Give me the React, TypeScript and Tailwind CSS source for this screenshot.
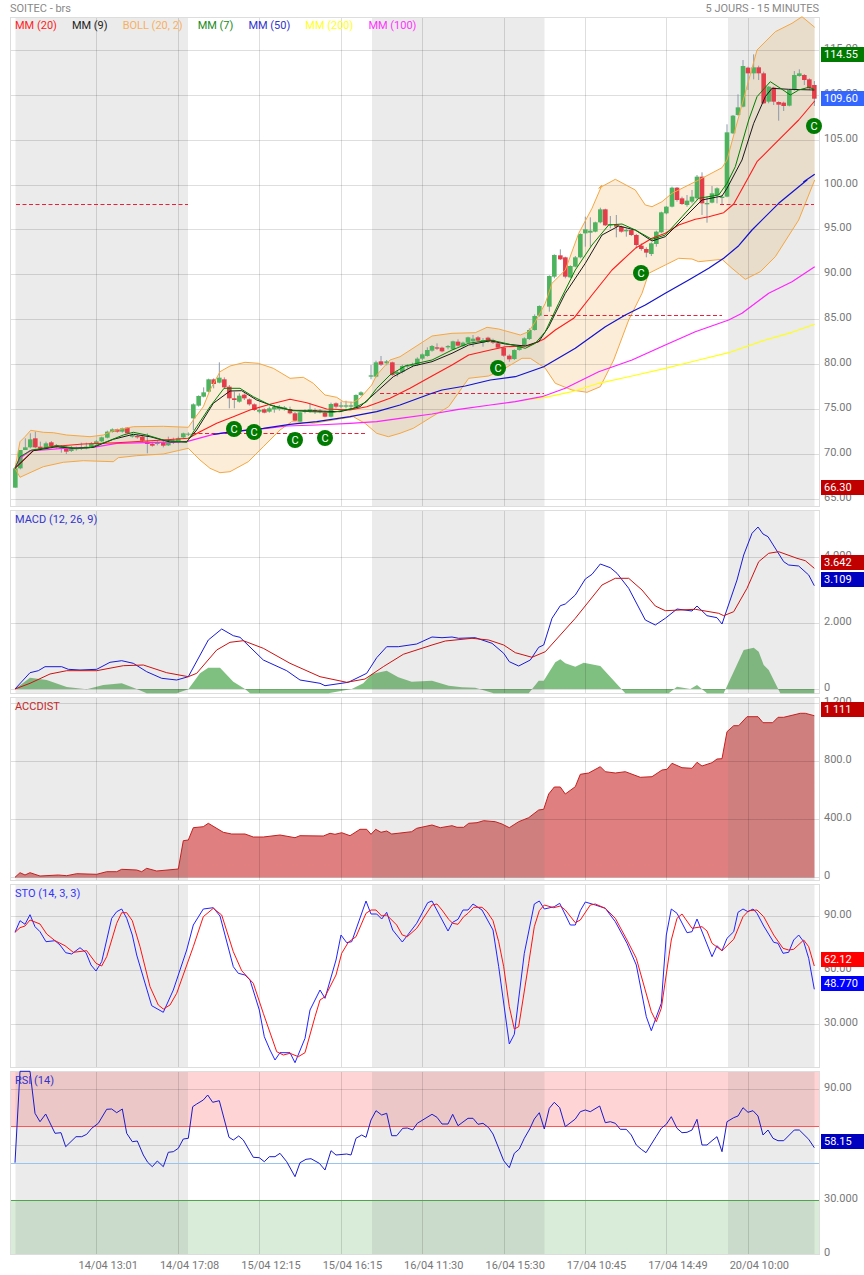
import type { ReactNode } from 'react';

type Pt = number[];

// points are traced off 3x crops, so each run carries the crop origin
const seg = (ox: number, oy: number, s: string): Pt[] =>
  s.trim().split(/\s+/).map((p) => {
    const [x, y] = p.split(',').map(Number);
    return [ox + x / 3, oy + y / 3];
  });
const pts = (a: Pt[]) => a.map((p) => `${p[0].toFixed(1)},${p[1].toFixed(1)}`).join(' ');

const VGRID = [96.5, 178.5, 259.5, 341.5, 422.5, 504.5, 585.5, 666.5, 748.5];
const BANDS = [[15.5, 188], [372, 544.5], [728, 814.5]];
const DATES = ['14/04 13:01', '14/04 17:08', '15/04 12:15', '15/04 16:15', '16/04 11:30', '16/04 15:30', '17/04 10:45', '17/04 14:49', '20/04 10:00'];

const bollUp = [
  ...seg(0, 260, '45,625 60,545 75,530 92,511 130,517 160,518 200,525 270,530 310,525 340,512 400,500 490,499 565,502 580,480 610,440 630,390 660,335 690,318 735,307 775,310 820,325 870,355 910,352 940,370 975,405 1010,412 1030,425 1060,427 1080,415 1115,375 1130,345 1170,300 1200,290 1296,228'),
  ...seg(432, 180, '60,460 130,458 165,442 200,447 265,465 290,455 310,425 340,370 360,310 400,270 440,160 480,85 510,15'),
  ...seg(432, 0, '500,565 550,538 610,570 640,615 660,620 690,605 720,580 800,540 870,503 885,480 920,350 975,150 1030,95 1080,70 1110,50 1148,82'),
];
const bollDown = [
  ...seg(0, 260, '45,625 60,652 90,638 130,620 190,607 250,602 340,605 355,593 410,587 490,582 565,565 600,600 630,625 660,638 690,635 745,605 790,560 840,510 875,485 900,487 940,490 1000,480 1060,470 1095,490 1130,520 1165,530 1200,520 1240,505 1296,470'),
  ...seg(432, 180, '50,680 110,595 170,588 210,570 270,535 295,535 340,565 370,610 420,630 465,637 505,620 545,540 590,420 630,340 650,280 700,255 740,235 780,237 800,245 870,238 900,265 940,298 985,275 1030,230 1100,120 1148,0'),
];
const mm20 = [
  ...seg(0, 260, '45,625 100,572 150,560 250,552 350,548 490,540 565,535 600,515 650,490 700,470 750,450 810,433 870,418 920,428 980,447 1050,450 1100,440 1170,415 1230,385 1296,348'),
  ...seg(432, 180, '60,555 110,525 175,510 220,500 290,497 335,478 370,450 425,415 480,345 540,270 610,205 660,175 700,160 740,135 790,118 830,110 875,98 905,72 945,0'),
  ...seg(432, 0, '975,485 1020,440 1060,400 1100,360 1148,303'),
];
const mm50 = [
  ...seg(0, 260, '640,523 700,515 790,505 870,493 950,485 1050,470 1130,455 1200,435 1296,400'),
  ...seg(432, 180, '30,630 100,618 175,600 250,590 335,560 430,505 520,440 580,405 640,375 700,340 770,300 830,265 875,235 920,197 960,150 1040,70 1125,0'),
  ...seg(432, 0, '1115,545 1148,523'),
];
const mm100 = [
  ...seg(0, 260, '45,625 60,595 90,572 130,570 190,565 280,562 350,550 440,548 560,545 640,523 700,515 800,505 860,498 950,495 1050,490 1130,485 1200,475 1296,462'),
  ...seg(432, 180, '80,688 175,675 250,665 330,650 400,625 500,575 600,540 700,495 790,455 890,420 930,400 1010,340 1080,305 1148,260'),
];
const mm200 = seg(432, 180, '280,660 340,652 420,635 500,610 600,588 700,565 800,540 890,518 1000,480 1080,457 1148,433');
const mm7 = [
  ...seg(0, 260, '45,625 60,590 95,570 150,562 170,557 230,565 270,563 320,545 370,525 400,517 440,525 490,540 560,547 590,500 630,440 672,385 720,385 760,410 810,435 870,450 930,455 1000,457 1060,445 1100,425 1130,385 1170,345 1215,318 1296,300'),
  ...seg(432, 180, '60,510 110,490 175,480 220,490 280,505 310,490 340,455 380,370 430,270 480,195 530,135 570,132 610,150 660,178 700,165 750,110 800,55 860,45 885,10'),
  ...seg(432, 0, '910,500 950,360 975,290 1015,245 1050,268 1075,285 1100,270 1130,262 1147,268'),
];
const mm9 = [
  ...seg(0, 260, '45,625 100,572 170,560 220,565 280,562 340,538 400,523 450,530 510,546 560,545 590,510 640,430 690,393 725,392 770,420 820,438 880,452 950,453 1020,455 1080,440 1130,395 1180,350 1240,318 1296,305'),
  ...seg(432, 180, '60,520 110,495 175,482 220,492 280,498 320,485 350,440 400,340 460,250 510,165 560,138 610,150 660,183 700,170 760,110 810,60 870,48 885,25'),
  ...seg(432, 0, '930,480 965,370 1000,290 1020,265 1070,268 1147,270'),
];

type Candle = [number, number, number, number, number, 'g' | 'r'];
const mapCandles = (ox: number, oy: number, rows: Candle[]) =>
  rows.map(([x, t, b, wt, wb, c]) => ({ x: ox + x / 3, t: oy + t / 3, b: oy + b / 3, wt: oy + wt / 3, wb: oy + wb / 3, c }));

const candles = [
  ...mapCandles(0, 260, [
    [46, 625, 683, 625, 683, 'g'], [61, 570, 625, 570, 628, 'g'], [76, 562, 570, 535, 570, 'g'], [91, 538, 562, 520, 565, 'g'],
    [106, 535, 562, 515, 565, 'r'], [121, 560, 566, 545, 572, 'r'], [138, 550, 568, 545, 570, 'g'], [154, 547, 558, 543, 565, 'r'],
    [169, 556, 562, 552, 566, 'r'], [184, 562, 566, 555, 578, 'g'], [199, 567, 575, 560, 582, 'r'], [214, 565, 573, 558, 576, 'g'],
    [229, 564, 568, 560, 572, 'g'], [244, 562, 566, 548, 570, 'g'], [259, 560, 565, 548, 568, 'g'], [274, 550, 562, 546, 564, 'g'],
    [289, 544, 552, 540, 556, 'g'], [305, 532, 544, 530, 546, 'g'], [322, 515, 533, 512, 535, 'g'], [337, 508, 516, 505, 518, 'g'],
    [352, 508, 515, 506, 518, 'r'], [367, 505, 515, 503, 518, 'g'], [382, 503, 520, 501, 522, 'r'], [397, 525, 530, 520, 533, 'g'],
    [412, 528, 532, 524, 536, 'r'], [427, 530, 542, 526, 546, 'r'], [442, 545, 552, 520, 580, 'r'], [457, 551, 557, 545, 560, 'r'],
    [472, 546, 552, 540, 556, 'g'], [490, 547, 557, 540, 562, 'r'], [505, 548, 556, 530, 558, 'g'], [520, 542, 548, 533, 552, 'g'],
    [535, 535, 547, 530, 550, 'g'], [550, 520, 532, 518, 534, 'g'], [565, 521, 524, 517, 528, 'g'], [580, 433, 475, 430, 510, 'g'],
    [596, 408, 437, 406, 440, 'g'], [611, 397, 410, 382, 412, 'g'], [626, 358, 395, 356, 397, 'g'], [641, 358, 372, 355, 385, 'r'],
    [658, 353, 368, 307, 370, 'g'], [673, 358, 382, 352, 385, 'r'], [688, 380, 415, 375, 445, 'r'], [703, 415, 420, 395, 445, 'r'],
    [718, 407, 425, 400, 428, 'g'], [733, 404, 415, 400, 420, 'r'], [748, 418, 433, 415, 437, 'r'], [763, 433, 450, 430, 453, 'r'],
    [778, 450, 455, 445, 460, 'g'], [793, 448, 458, 445, 460, 'r'], [808, 445, 455, 440, 458, 'g'], [823, 441, 448, 435, 458, 'g'],
    [838, 440, 447, 435, 452, 'g'], [853, 442, 448, 438, 452, 'g'], [870, 447, 460, 440, 463, 'r'], [885, 460, 482, 456, 484, 'r'],
    [900, 457, 485, 455, 487, 'g'], [915, 452, 456, 448, 460, 'g'], [930, 448, 454, 430, 458, 'g'], [945, 450, 454, 445, 462, 'r'],
    [960, 452, 456, 447, 460, 'r'], [975, 458, 470, 452, 472, 'r'], [993, 432, 470, 428, 472, 'g'], [1008, 430, 440, 427, 445, 'r'],
    [1023, 436, 440, 425, 445, 'g'], [1038, 436, 440, 422, 445, 'g'], [1053, 436, 440, 425, 445, 'g'], [1068, 405, 440, 403, 442, 'g'],
    [1083, 397, 405, 394, 408, 'g'], [1113, 346, 350, 315, 358, 'g'], [1128, 307, 350, 302, 352, 'g'], [1143, 304, 314, 288, 318, 'r'],
    [1160, 304, 310, 300, 316, 'g'], [1177, 307, 345, 305, 348, 'r'], [1192, 336, 342, 330, 350, 'g'], [1207, 318, 336, 314, 340, 'g'],
    [1222, 316, 320, 312, 325, 'g'], [1237, 314, 318, 308, 322, 'g'], [1252, 296, 314, 292, 318, 'g'], [1267, 283, 296, 280, 300, 'g'],
    [1282, 270, 288, 262, 290, 'g'],
  ]),
  ...mapCandles(432, 180, [
    [0, 498, 512, 495, 515, 'g'], [15, 502, 506, 490, 510, 'r'], [30, 503, 514, 500, 517, 'r'], [48, 498, 502, 495, 508, 'g'],
    [63, 484, 508, 482, 510, 'g'], [78, 485, 497, 478, 500, 'r'], [93, 488, 498, 485, 502, 'g'], [108, 472, 488, 470, 490, 'g'],
    [123, 476, 484, 465, 500, 'g'], [138, 472, 482, 468, 486, 'r'], [153, 480, 488, 474, 500, 'g'], [168, 473, 485, 470, 488, 'r'],
    [183, 480, 488, 476, 492, 'r'], [198, 490, 503, 486, 506, 'r'], [215, 503, 527, 500, 530, 'r'], [232, 527, 538, 523, 545, 'r'],
    [247, 510, 537, 508, 540, 'g'], [262, 497, 510, 495, 512, 'g'], [277, 475, 495, 472, 497, 'g'], [292, 450, 477, 445, 480, 'g'],
    [308, 408, 450, 403, 452, 'g'], [322, 378, 407, 376, 410, 'g'], [352, 288, 380, 286, 395, 'g'], [367, 225, 290, 223, 295, 'g'],
    [385, 226, 238, 208, 240, 'r'], [400, 232, 290, 230, 295, 'r'], [415, 258, 292, 256, 294, 'g'], [430, 232, 260, 228, 262, 'g'],
    [445, 162, 232, 160, 235, 'g'], [460, 148, 160, 110, 200, 'g'], [475, 152, 158, 112, 200, 'g'], [490, 127, 155, 125, 157, 'g'],
    [505, 88, 127, 83, 130, 'g'], [520, 88, 136, 86, 138, 'r'], [535, 132, 136, 108, 145, 'g'], [553, 132, 140, 105, 172, 'r'],
    [568, 140, 155, 137, 158, 'r'], [583, 150, 154, 145, 170, 'g'], [598, 150, 165, 147, 168, 'r'], [613, 165, 195, 162, 205, 'r'],
    [628, 197, 207, 190, 212, 'r'], [643, 207, 218, 202, 232, 'r'], [658, 190, 222, 187, 228, 'g'], [673, 155, 192, 152, 200, 'g'],
    [688, 97, 157, 95, 160, 'g'], [703, 80, 100, 78, 103, 'g'],
  ]),
  ...mapCandles(432, 0, [
    [720, 563, 620, 560, 622, 'g'], [735, 563, 600, 561, 605, 'r'], [750, 595, 612, 590, 615, 'r'], [765, 602, 615, 585, 620, 'g'],
    [780, 590, 605, 570, 610, 'g'], [795, 530, 595, 525, 600, 'g'], [810, 530, 610, 517, 645, 'r'], [825, 609, 613, 590, 668, 'g'],
    [840, 580, 608, 558, 610, 'g'], [855, 565, 585, 562, 610, 'g'], [870, 590, 594, 585, 612, 'g'], [885, 397, 590, 373, 592, 'g'],
    [903, 347, 400, 345, 402, 'g'], [918, 322, 345, 283, 347, 'g'], [933, 198, 320, 180, 322, 'g'], [948, 203, 220, 200, 270, 'r'],
    [965, 202, 220, 163, 238, 'g'], [980, 202, 220, 197, 240, 'r'], [995, 220, 310, 215, 312, 'r'], [1010, 260, 305, 258, 310, 'g'],
    [1025, 263, 305, 260, 315, 'r'], [1040, 306, 314, 304, 362, 'r'], [1055, 308, 318, 305, 333, 'r'], [1072, 270, 317, 268, 319, 'g'],
    [1087, 225, 270, 213, 272, 'g'], [1102, 220, 228, 208, 230, 'g'], [1117, 225, 240, 222, 255, 'r'], [1132, 238, 265, 235, 270, 'r'],
    [1147, 255, 296, 243, 318, 'r'],
  ]),
];

const MARKERS = [[234, 429], [254, 432], [295, 440], [325, 438], [498, 368], [641, 273], [814, 126]];
const DASHES = [[16, 188, 204.5], [720, 814, 204.5], [192, 367, 433.5], [380, 544, 393.5], [544, 722, 315.5]];

const macd = [
  ...seg(0, 505, '45,552 90,503 115,497 135,485 185,485 205,493 240,495 290,493 330,472 365,467 400,475 440,500 485,520 530,525 565,515 625,405 665,372 700,392 720,397 790,465 860,497 900,525 960,535 975,542 1045,532 1100,505 1130,458 1160,425 1195,425 1250,417 1296,396'),
  ...seg(432, 505, '30,398 60,396 80,400 130,398 180,415 215,445 232,470 260,483 295,465 320,427 335,420 360,340 385,302 400,297 430,270 460,222 480,208 505,177 535,188 555,205 590,250 640,345 670,360 700,340 735,312 780,318 795,303 825,332 855,338 870,357 915,225 935,150 960,85 978,66 993,87 1008,95 1055,170 1070,180 1100,183 1130,210 1147,242'),
];
const macdSig = [
  ...seg(0, 505, '45,552 90,535 150,507 200,497 290,497 370,482 430,480 500,503 565,515 590,505 650,435 690,412 730,407 790,430 870,475 960,515 1040,532 1095,522 1150,485 1210,448 1296,420'),
  ...seg(432, 505, '40,408 120,400 170,405 215,420 250,443 300,457 340,440 430,340 510,240 550,220 590,220 630,255 670,303 700,317 790,313 860,325 875,332 905,320 945,250 980,170 1010,145 1040,140 1095,160 1120,167 1147,190'),
];
const macdHist = [
  ...seg(0, 505, '45,552 90,518 140,525 200,546 260,553 310,540 365,535 410,552 440,565 530,565 565,553 600,505 625,488 660,488 700,530 735,552 750,565 985,565 1055,552 1090,535 1115,507 1160,497 1195,517 1235,530 1296,527'),
  ...seg(432, 505, '50,542 90,547 130,548 185,565 290,565 320,527 335,527 370,472 385,463 400,475 430,485 455,473 505,483 580,565 710,565 735,545 775,552 795,540 825,565 875,565 910,490 935,435 965,428 980,440 995,480 1010,495 1045,565 1147,565 1147,552'),
];

const acc = [
  ...seg(0, 505, '45,1117 60,1103 75,1110 90,1103 120,1113 175,1110 200,1112 230,1106 290,1108 320,1100 350,1100 365,1093 410,1095 425,1100 440,1090 470,1098 535,1092 550,1007 565,1005 580,968 610,965 625,955 670,982 695,987 735,987 760,996 790,996 840,990 885,998 900,992 970,993 990,985 1005,988 1025,983 1050,992 1080,973 1100,973 1113,988 1127,973 1143,982 1160,978 1175,987 1235,980 1250,970 1296,960'),
  ...seg(432, 505, '25,968 60,962 75,967 95,967 110,955 135,953 155,947 190,950 210,957 232,968 260,950 290,938 320,915 335,913 350,867 367,846 385,846 400,867 430,845 445,808 470,804 505,785 520,800 550,804 580,800 625,817 660,815 690,795 705,793 720,775 750,788 780,790 795,772 810,783 840,773 855,762 870,761 885,680 905,662 920,662 945,635 978,635 993,653 1022,653 1038,637 1055,637 1105,625 1120,625 1147,632'),
];

const stoK = [
  ...seg(0, 880, '45,157 60,122 75,133 90,104 105,140 120,155 138,185 165,182 180,195 197,218 215,222 240,203 258,218 273,255 288,273 305,245 335,115 350,95 365,87 380,115 397,165 410,225 455,377 490,397 520,330 560,210 580,135 610,87 640,83 660,108 700,260 715,280 735,285 750,300 778,390 793,470 810,510 825,540 840,518 870,518 885,548 915,475 930,390 960,330 975,355 1008,240 1023,165 1040,188 1055,185 1098,63 1113,102 1130,102 1145,117 1160,97 1178,150 1207,186 1250,130 1283,68 1296,63'),
  ...seg(432, 880, '48,153 62,127 78,118 93,90 108,90 123,72 150,90 183,150 200,260 232,492 247,463 277,220 307,72 322,63 337,87 367,80 383,70 415,135 430,135 445,92 460,66 490,75 520,85 550,125 585,190 613,255 643,410 658,452 688,370 703,165 718,87 735,100 765,158 780,155 795,117 840,230 855,197 870,212 885,175 905,155 918,97 933,87 948,95 963,87 975,100 995,138 1025,187 1038,190 1053,220 1070,217 1085,180 1100,165 1115,185 1130,235 1147,328'),
];
const stoD = [
  ...seg(0, 880, '45,157 60,143 75,138 90,120 120,132 140,162 165,182 195,197 220,217 260,212 288,250 305,258 320,230 350,130 365,98 380,98 397,122 420,200 450,320 475,375 490,387 510,375 530,340 580,200 610,110 640,85 665,105 700,215 725,272 760,310 790,400 830,515 850,525 870,520 895,530 915,518 945,410 960,360 975,350 1008,285 1025,220 1045,187 1068,170 1098,100 1113,90 1128,90 1145,108 1160,105 1190,135 1207,165 1222,170 1250,145 1296,75'),
  ...seg(432, 880, '15,72 30,90 50,118 62,130 78,133 95,110 108,100 125,82 150,82 165,95 183,122 200,185 215,260 232,380 247,447 260,440 290,250 307,140 322,92 337,75 365,83 385,78 400,90 430,128 445,120 475,75 490,72 520,85 550,115 585,180 613,235 658,395 673,425 688,385 718,180 735,115 750,102 780,145 810,140 825,153 840,190 870,212 905,178 933,110 950,92 975,90 995,110 1025,165 1053,205 1070,210 1085,208 1115,180 1130,200 1147,258'),
];
const rsi = [
  ...seg(0, 880, '45,848 60,574 90,574 105,700 120,725 137,702 165,760 183,758 197,800 228,770 245,770 260,763 275,745 295,730 320,688 335,687 350,698 367,687 380,760 397,785 412,783 430,825 443,847 457,860 472,843 490,860 505,817 520,815 535,805 550,777 565,775 578,680 590,672 610,660 623,645 638,667 658,662 687,772 700,780 716,768 730,780 760,832 778,833 793,845 808,830 825,830 840,820 860,845 885,890 900,848 918,838 933,836 958,850 975,870 993,812 1008,825 1040,822 1053,825 1068,775 1085,765 1098,772 1113,720 1128,692 1145,705 1160,700 1175,767 1190,767 1208,745 1222,744 1238,750 1252,730 1296,703'),
  ...seg(432, 880, '15,712 30,732 48,732 62,703 78,737 108,715 123,715 138,733 153,730 170,743 183,762 215,842 232,863 247,820 262,807 277,775 293,747 307,717 322,698 337,747 352,685 367,667 383,683 400,740 430,717 445,695 460,690 475,695 503,678 520,728 535,725 550,730 565,748 583,748 598,765 613,795 628,808 642,818 672,770 688,745 703,733 718,710 735,745 750,758 765,757 780,750 795,718 810,795 825,795 840,782 855,770 870,815 885,725 905,713 918,708 933,683 948,697 963,692 978,708 993,765 1008,750 1023,775 1038,782 1055,782 1087,750 1102,750 1130,778 1147,803'),
];

type Tick = { y: number; label: string };
type Tag = { y: number; label: string; bg: string };

function Line({ data, color, width = 1 }: { data: Pt[]; color: string; width?: number }) {
  return <polyline points={pts(data)} fill="none" stroke={color} strokeWidth={width} strokeLinejoin="round" />;
}

function Pane({
  top, height, hlines, ticks, tags, legend, fills, children,
}: {
  top: number; height: number; hlines: number[]; ticks: Tick[]; tags: Tag[]; legend: ReactNode; fills?: ReactNode; children: ReactNode;
}) {
  const inner = height - 2;
  return (
    <div className="flex pl-[10px]">
      <div className="relative w-[810px] border border-[#dddddd] box-border" style={{ height }}>
        <svg className="block overflow-visible" width={808} height={inner} viewBox={`11 ${top + 1} 808 ${inner}`}>
          {fills}
          {BANDS.map(([a, b]) => (
            <rect key={a} x={a} y={top + 1} width={b - a} height={inner} fill="#808080" fillOpacity={0.16} />
          ))}
          {hlines.map((y) => (
            <line key={y} x1={11} x2={819} y1={y} y2={y} stroke="#000" strokeOpacity={0.13} />
          ))}
          {VGRID.map((x) => (
            <line key={x} x1={x} x2={x} y1={top + 1} y2={top + 1 + inner} stroke="#000" strokeOpacity={0.13} />
          ))}
          {children}
        </svg>
        {legend}
      </div>
      <div className="relative w-[44px]">
        {ticks.map((t) => (
          <span key={t.label} className="absolute left-[4px] leading-[14px] text-[#777777]" style={{ top: t.y - top - 6 }}>
            {t.label}
          </span>
        ))}
        {tags.map((t) => (
          <span
            key={t.label}
            className="absolute left-[1px] w-[43px] h-[15px] pl-[3px] leading-[16px] text-white"
            style={{ top: t.y - top, backgroundColor: t.bg }}
          >
            {t.label}
          </span>
        ))}
      </div>
    </div>
  );
}

export default function App() {
  return (
    <div className="w-[864px] h-[1275px] overflow-hidden bg-white font-['Roboto',sans-serif] text-[11px]">
      <div className="flex justify-between h-[17px] pl-[10px] pr-[45px] leading-[18px] text-[#888888]">
        <span>SOITEC - brs</span>
        <span>5 JOURS - 15 MINUTES</span>
      </div>
      <div className="flex flex-col gap-[3px]">
        <Pane
          top={17}
          height={490}
          hlines={[50.5, 95.5, 140.5, 185.5, 229.5, 274.5, 319.5, 364.5, 409.5, 454.5, 499.5]}
          ticks={[
            { y: 47.5, label: '115.00' }, { y: 92.5, label: '110.00' }, { y: 137.7, label: '105.00' }, { y: 182.7, label: '100.00' },
            { y: 226.7, label: '95.00' }, { y: 271.7, label: '90.00' }, { y: 316.7, label: '85.00' }, { y: 361.7, label: '80.00' },
            { y: 406.7, label: '75.00' }, { y: 451.7, label: '70.00' }, { y: 496.7, label: '65.00' },
          ]}
          tags={[
            { y: 47, label: '114.55', bg: '#007a00' },
            { y: 91, label: '109.60', bg: '#3366ff' },
            { y: 480, label: '66.30', bg: '#c00000' },
          ]}
          legend={
            <div className="absolute top-[1px] left-[4px] flex gap-[15px] leading-[14px] whitespace-nowrap">
              <span className="text-[#ff2222]">MM (20)</span>
              <span className="text-[#222222]">MM (9)</span>
              <span className="text-[#f9b060]">BOLL (20, 2)</span>
              <span className="text-[#1a8a1a]">MM (7)</span>
              <span className="text-[#3333cc]">MM (50)</span>
              <span className="text-[#ffff22]">MM (200)</span>
              <span className="text-[#ff33ff]">MM (100)</span>
            </div>
          }
          fills={<polygon points={pts([...bollUp, ...[...bollDown].reverse()])} fill="#f0931e" fillOpacity={0.17} />}
        >
          {DASHES.map(([a, b, y]) => (
            <line key={`${a}-${y}`} x1={a} x2={b} y1={y} y2={y} stroke="#e8203a" strokeDasharray="4 2.5" />
          ))}
          {candles.map((c) => (
            <line key={`w${c.x}`} x1={c.x} x2={c.x} y1={c.wt} y2={c.wb} stroke="#8c9aa8" />
          ))}
          {candles.map((c) => (
            <rect key={c.x} x={c.x - 2.3} y={c.t} width={4.6} height={c.b - c.t} fill={c.c === 'g' ? '#4db35e' : '#e33d4a'} />
          ))}
          <Line data={bollUp} color="#f5a742" />
          <Line data={bollDown} color="#f5a742" />
          <Line data={mm200} color="#ffff11" width={1.2} />
          <Line data={mm100} color="#ff22ff" width={1.2} />
          <Line data={mm50} color="#1111cc" width={1.2} />
          <Line data={mm20} color="#ff1a1a" width={1.1} />
          <Line data={mm9} color="#1a1a1a" />
          <Line data={mm7} color="#008000" />
          {MARKERS.map(([x, y]) => (
            <g key={x}>
              <circle cx={x} cy={y} r={8} fill="#007a00" />
              <text x={x} y={y + 4} textAnchor="middle" fontSize={11} fill="#fff">C</text>
            </g>
          ))}
        </Pane>

        <Pane
          top={510}
          height={184}
          hlines={[557.5, 623.5, 689.5]}
          ticks={[{ y: 555, label: '4.000' }, { y: 621, label: '2.000' }, { y: 687, label: '0' }]}
          tags={[
            { y: 555, label: '3.642', bg: '#c00000' },
            { y: 572, label: '3.109', bg: '#0000c0' },
          ]}
          legend={<div className="absolute top-[2px] left-[4px] leading-[14px] text-[#3333cc]">MACD (12, 26, 9)</div>}
          fills={<polygon points={pts([...macdHist, [15, 689]])} fill="#008000" fillOpacity={0.5} />}
        >
          <Line data={macd} color="#1a1ad6" />
          <Line data={macdSig} color="#cc1111" />
        </Pane>

        <Pane
          top={697}
          height={184}
          hlines={[703.5, 761.5, 819.5, 877.5]}
          ticks={[{ y: 700.7, label: '1.200' }, { y: 759, label: '800.0' }, { y: 817, label: '400.0' }, { y: 875, label: '0' }]}
          tags={[{ y: 702, label: '1 111', bg: '#c00000' }]}
          legend={<div className="absolute top-[2px] left-[4px] leading-[14px] text-[#c62828]">ACCDIST</div>}
          fills={<polygon points={pts([...acc, [814.5, 877.5], [15, 877.5]])} fill="#bf0000" fillOpacity={0.5} />}
        >
          <Line data={acc} color="#c42020" />
        </Pane>

        <Pane
          top={884}
          height={184}
          hlines={[916.5, 970.5, 1024.5]}
          ticks={[{ y: 914, label: '90.00' }, { y: 968.3, label: '60.00' }, { y: 1022, label: '30.000' }]}
          tags={[
            { y: 952, label: '62.12', bg: '#ff0000' },
            { y: 976, label: '48.770', bg: '#0000ff' },
          ]}
          legend={<div className="absolute top-[2px] left-[4px] leading-[14px] text-[#3333ff]">STO (14, 3, 3)</div>}
        >
          <Line data={stoK} color="#2222ff" />
          <Line data={stoD} color="#ff1111" />
        </Pane>

        <Pane
          top={1071}
          height={184}
          hlines={[1089.5, 1145.5]}
          ticks={[{ y: 1087, label: '90.00' }, { y: 1198, label: '30.000' }, { y: 1252, label: '0' }]}
          tags={[{ y: 1134, label: '58.15', bg: '#0000c0' }]}
          legend={<div className="absolute top-[2px] left-[4px] leading-[14px] text-[#3333cc]">RSI (14)</div>}
          fills={
            <>
              <rect x={11} y={1072} width={808} height={54.5} fill="#ff0000" fillOpacity={0.17} />
              <rect x={11} y={1200.5} width={808} height={53.5} fill="#008000" fillOpacity={0.15} />
            </>
          }
        >
          <line x1={11} x2={819} y1={1126.5} y2={1126.5} stroke="#ff5555" />
          <line x1={11} x2={819} y1={1163.5} y2={1163.5} stroke="#99c4ee" />
          <line x1={11} x2={819} y1={1200.5} y2={1200.5} stroke="#4ea54e" />
          <Line data={rsi} color="#1a1acc" />
        </Pane>
      </div>
      <div className="flex pl-[78.5px] h-5 leading-[22px] text-[#777777]">
        {DATES.map((d) => (
          <span key={d} className="w-[81.4px] shrink-0">{d}</span>
        ))}
      </div>
    </div>
  );
}
